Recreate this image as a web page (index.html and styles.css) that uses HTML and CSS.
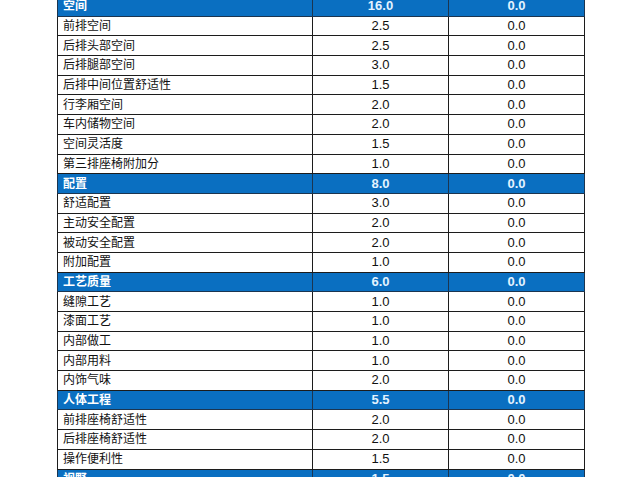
FILE: index.html
```html
<!DOCTYPE html>
<html>
<head>
<meta charset="utf-8">
<link rel="stylesheet" href="styles.css">
</head>
<body>
<table class="score">
<colgroup><col class="c1"><col class="c2"><col class="c3"></colgroup>
<tbody>
<tr class="head"><td>空间</td><td>16.0</td><td>0.0</td></tr>
<tr><td>前排空间</td><td>2.5</td><td>0.0</td></tr>
<tr><td>后排头部空间</td><td>2.5</td><td>0.0</td></tr>
<tr><td>后排腿部空间</td><td>3.0</td><td>0.0</td></tr>
<tr><td>后排中间位置舒适性</td><td>1.5</td><td>0.0</td></tr>
<tr><td>行李厢空间</td><td>2.0</td><td>0.0</td></tr>
<tr><td>车内储物空间</td><td>2.0</td><td>0.0</td></tr>
<tr><td>空间灵活度</td><td>1.5</td><td>0.0</td></tr>
<tr><td>第三排座椅附加分</td><td>1.0</td><td>0.0</td></tr>
<tr class="head"><td>配置</td><td>8.0</td><td>0.0</td></tr>
<tr><td>舒适配置</td><td>3.0</td><td>0.0</td></tr>
<tr><td>主动安全配置</td><td>2.0</td><td>0.0</td></tr>
<tr><td>被动安全配置</td><td>2.0</td><td>0.0</td></tr>
<tr><td>附加配置</td><td>1.0</td><td>0.0</td></tr>
<tr class="head"><td>工艺质量</td><td>6.0</td><td>0.0</td></tr>
<tr><td>缝隙工艺</td><td>1.0</td><td>0.0</td></tr>
<tr><td>漆面工艺</td><td>1.0</td><td>0.0</td></tr>
<tr><td>内部做工</td><td>1.0</td><td>0.0</td></tr>
<tr><td>内部用料</td><td>1.0</td><td>0.0</td></tr>
<tr><td>内饰气味</td><td>2.0</td><td>0.0</td></tr>
<tr class="head"><td>人体工程</td><td>5.5</td><td>0.0</td></tr>
<tr><td>前排座椅舒适性</td><td>2.0</td><td>0.0</td></tr>
<tr><td>后排座椅舒适性</td><td>2.0</td><td>0.0</td></tr>
<tr><td>操作便利性</td><td>1.5</td><td>0.0</td></tr>
<tr class="head"><td>视野</td><td>1.5</td><td>0.0</td></tr>
</tbody>
</table>
</body>
</html>
```
FILE: styles.css
```css
html, body {
  margin: 0;
  padding: 0;
  background: #ffffff;
  overflow: hidden;
}
body {
  font-family: "Liberation Sans", "Noto Sans CJK SC", sans-serif;
  font-size: 13px;
  color: #111111;
}
.score {
  border-collapse: collapse;
  table-layout: fixed;
  width: 527px;
  margin-left: 57px;
  margin-top: -4px;
}
.c1 { width: 255px; }
.c2 { width: 136px; }
.c3 { width: 136px; }
.score td {
  height: 18.7px;
  padding: 0 5px;
  border: 1px solid #1c1c1c;
  line-height: 18px;
  white-space: nowrap;
  overflow: hidden;
  vertical-align: middle;
}
.score td:first-child {
  font-size: 12px;
  text-align: left;
}
.score td:nth-child(2),
.score td:nth-child(3) {
  text-align: center;
}
.score tr.head td {
  background: #0a6fc1;
  color: #ffffff;
  font-weight: bold;
  border-color: #1b3550;
}
.score tr.head td:nth-child(2),
.score tr.head td:nth-child(3) {
  color: #e4f3ff;
}
```
